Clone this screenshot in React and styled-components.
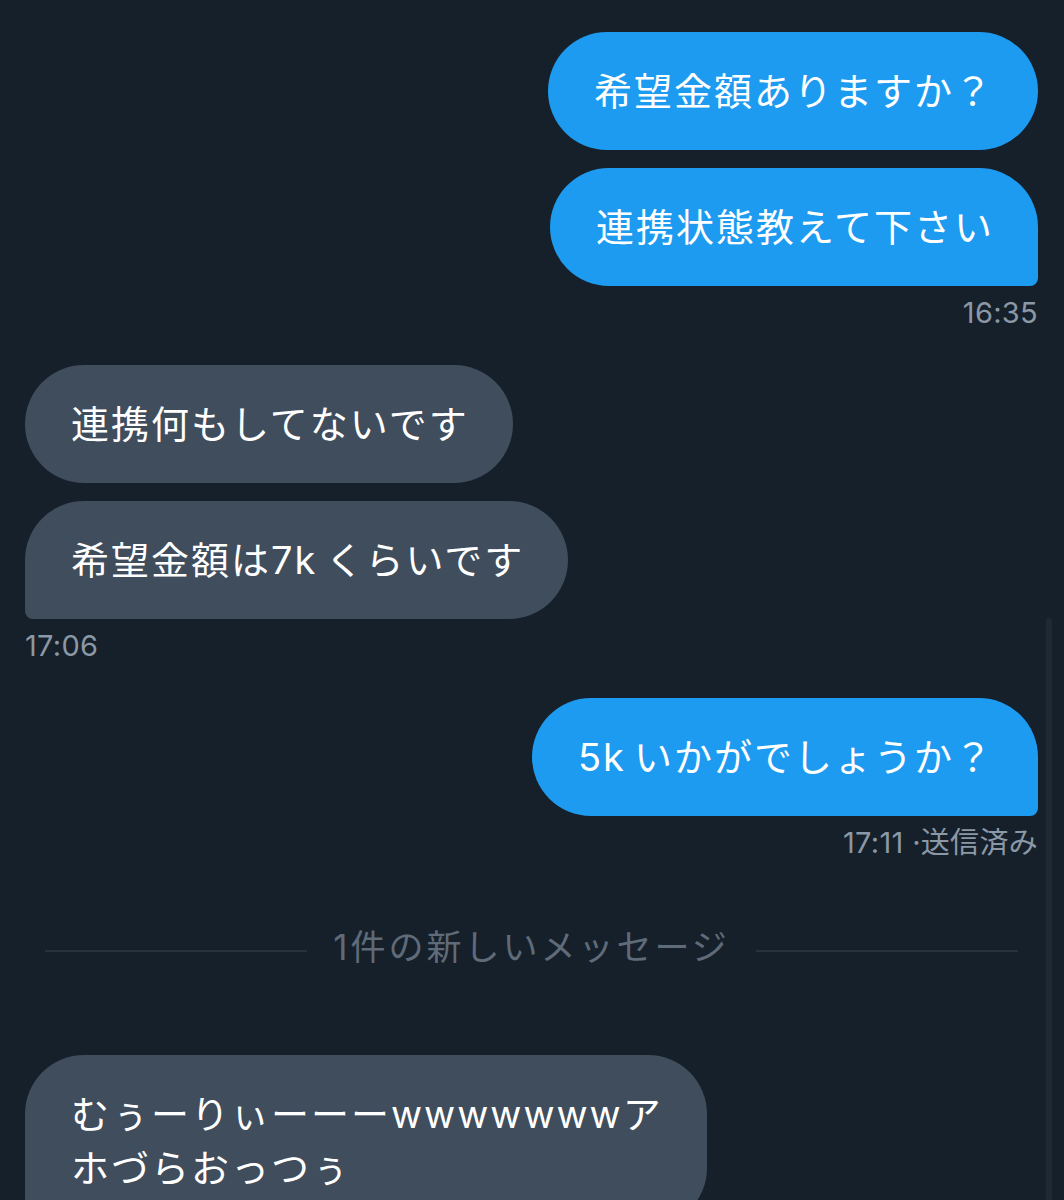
import React from 'react';
import styled, {createGlobalStyle} from 'styled-components';

const GlobalStyle = createGlobalStyle`
    html, body {
        margin: 0;
        padding: 0;
        background: #16202b;
    }
    body {
        font-family: Inter, 'Noto Sans CJK JP', sans-serif;
        -webkit-font-smoothing: antialiased;
    }
`;

const Screen = styled.div`
    position: relative;
    width: 1064px;
    height: 1200px;
    overflow: hidden;
    background: #16202b;
`;

const Thread = styled.div`
    display: flex;
    flex-direction: column;
    padding: 32px 26px 0 25px;
`;

const Group = styled.div`
    display: flex;
    flex-direction: column;
    align-items: ${props => props.$sent ? 'flex-end' : 'flex-start'};
    gap: 18px;
    margin-bottom: 36px;
`;

const Bubble = styled.div`
    padding: 32px 44px 32px 46px;
    font-size: 38px;
    line-height: 54px;
    letter-spacing: 2px;
    color: #ffffff;
    white-space: nowrap;
    background: ${props => props.$sent ? '#1d9bf0' : '#3f4d5c'};
    border-radius: 59px;
    ${props => props.$tail && (props.$sent
        ? 'border-bottom-right-radius: 8px;'
        : 'border-bottom-left-radius: 8px;')}
`;

// latin runs inside japanese text get a little extra room after them
const Latin = styled.span`
    margin-right: 8px;
`;

const Stamp = styled.div`
    margin-top: -7px;
    font-size: 29px;
    line-height: 32px;
    letter-spacing: 0.3px;
    color: #8b98a5;
    white-space: nowrap;
`;

const Divider = styled.div`
    display: flex;
    align-items: center;
    gap: 26px;
    margin: 30px 20px 86px 20px;
    font-size: 35px;
    line-height: 44px;
    letter-spacing: 3px;
    color: #5f6b78;
    white-space: nowrap;

    &::before, &::after {
        content: '';
        flex: 1;
        height: 2px;
        margin-top: 8px;
        background: #28323d;
    }
`;

const ScrollThumb = styled.div`
    position: absolute;
    top: 618px;
    right: 12px;
    width: 6px;
    height: 620px;
    border-radius: 3px;
    background: #1f2934;
`;

const messages = [
    {sent: true, lines: [<>希望金額ありますか？</>, <>連携状態教えて下さい</>], stamp: '16:35'},
    {sent: false, lines: [<>連携何もしてないです</>, <>希望金額は<Latin>7k</Latin>くらいです</>], stamp: '17:06'},
    {sent: true, lines: [<><Latin>5k</Latin>いかがでしょうか？</>], stamp: '17:11 ·送信済み'},
];

export default function App() {
    return (
        <Screen>
            <GlobalStyle/>
            <Thread>
                {messages.map((m, i) => (
                    <Group key={i} $sent={m.sent}>
                        {m.lines.map((text, j) => (
                            <Bubble key={j} $sent={m.sent} $tail={j === m.lines.length - 1}>
                                {text}
                            </Bubble>
                        ))}
                        <Stamp>{m.stamp}</Stamp>
                    </Group>
                ))}
                <Divider>1件の新しいメッセージ</Divider>
                <Group>
                    <Bubble $tail>
                        むぅーりぃーーーwwwwwwwア<br/>ホづらおっつぅ
                    </Bubble>
                </Group>
            </Thread>
            <ScrollThumb/>
        </Screen>
    );
}
